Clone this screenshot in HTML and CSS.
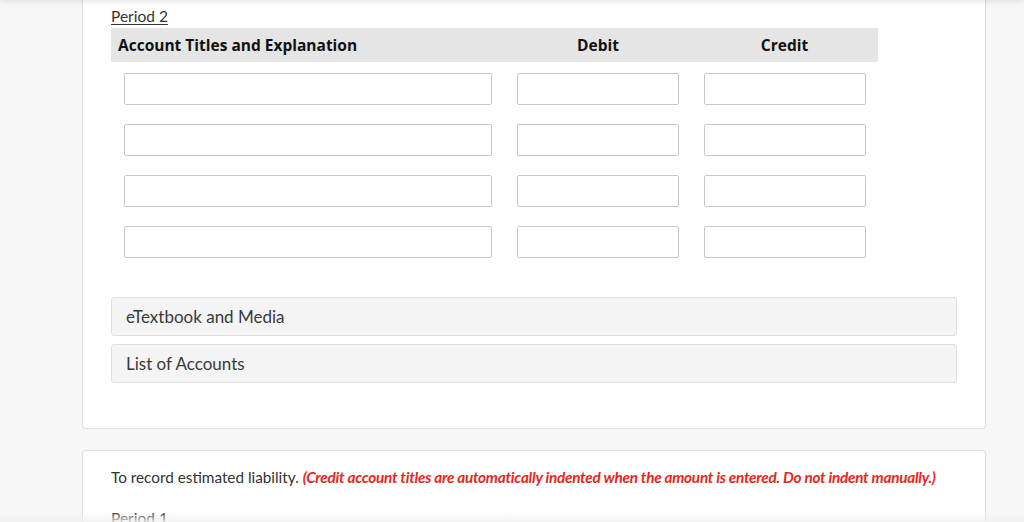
FILE: index.html
```html
<!DOCTYPE html>
<html lang="en">
<head>
    <meta charset="UTF-8">
    <meta name="viewport" content="width=device-width, initial-scale=1.0">
    <title>Journal Entries</title>
    <link rel="stylesheet" href="styles.css">
</head>
<body>
    <div class="top-shade"></div>

    <div class="page">
        <div class="card card-first">
            <a class="period" href="#">Period 2</a>
            <table class="journal">
                <colgroup>
                    <col class="w-title">
                    <col class="w-debit">
                    <col class="w-credit">
                </colgroup>
                <thead>
                    <tr>
                        <th class="col-title">Account Titles and Explanation</th>
                        <th class="col-amount">Debit</th>
                        <th class="col-amount">Credit</th>
                    </tr>
                </thead>
                <tbody>
                    <tr>
                        <td class="cell-title"><input type="text" class="field"></td>
                        <td class="cell-debit"><input type="text" class="field"></td>
                        <td class="cell-credit"><input type="text" class="field"></td>
                    </tr>
                    <tr>
                        <td class="cell-title"><input type="text" class="field"></td>
                        <td class="cell-debit"><input type="text" class="field"></td>
                        <td class="cell-credit"><input type="text" class="field"></td>
                    </tr>
                    <tr>
                        <td class="cell-title"><input type="text" class="field"></td>
                        <td class="cell-debit"><input type="text" class="field"></td>
                        <td class="cell-credit"><input type="text" class="field"></td>
                    </tr>
                    <tr>
                        <td class="cell-title"><input type="text" class="field"></td>
                        <td class="cell-debit"><input type="text" class="field"></td>
                        <td class="cell-credit"><input type="text" class="field"></td>
                    </tr>
                </tbody>
            </table>

            <div class="resources">
                <div class="resource">eTextbook and Media</div>
                <div class="resource">List of Accounts</div>
            </div>
        </div>

        <div class="card card-next">
            <p class="instructions">
                To record estimated liability.
                <em class="hint">(Credit account titles are automatically indented when the amount is entered. Do not indent manually.)</em>
            </p>
            <a class="period" href="#">Period 1</a>
        </div>
    </div>

    <div class="bottom-shade"></div>
</body>
</html>
```

FILE: styles.css
```css
/* pagina de lancamentos */
body {
    font-family: Lato, "Open Sans", Arial, sans-serif;
    margin: 0;
    padding: 0;
    background-color: #f7f7f7;
    color: #333;
    overflow: hidden;
}
.page {
    padding: 0 38px 0 82px;
}
.card {
    background: white;
    border: 1px solid #dedede;
    border-radius: 4px;
    padding: 0 28px;
}
.card-first {
    margin-top: -12px;
    border-top: none;
    border-top-left-radius: 0;
    border-top-right-radius: 0;
    padding-top: 18px;
    padding-bottom: 45px;
}
.card-next {
    margin-top: 21px;
    padding-top: 16px;
    padding-bottom: 20px;
}
.period {
    display: inline-block;
    font-size: 15.5px;
    line-height: 18px;
    color: #333;
    text-decoration: underline;
    text-underline-offset: 2px;
}
.journal {
    border-collapse: collapse;
    table-layout: fixed;
    width: 767px;
    margin-top: 3px;
}
.w-title {
    width: 394px;
}
.w-debit {
    width: 186px;
}
.w-credit {
    width: 187px;
}
.journal th {
    background: #e5e5e5;
    font-family: "Open Sans", Arial, sans-serif;
    font-size: 15.5px;
    font-weight: 700;
    color: #111;
    height: 34px;
    padding: 0;
}
.col-title {
    text-align: left;
    padding-left: 7px !important;
}
.col-amount {
    text-align: center;
}
.journal td {
    padding-top: 11px;
    padding-bottom: 8px;
}
.cell-title {
    padding-left: 13px;
    padding-right: 13px;
}
.cell-debit {
    padding-left: 12px;
    padding-right: 12px;
}
.cell-credit {
    padding-left: 13px;
    padding-right: 12px;
}
.field {
    display: block;
    box-sizing: border-box;
    width: 100%;
    height: 32px;
    margin: 0;
    border: 1px solid #c8c8c8;
    border-radius: 2px;
    background: white;
}
.resources {
    margin-top: 31px;
    display: flex;
    flex-direction: column;
    gap: 8px;
}
.resource {
    background: #f4f4f4;
    border: 1px solid #e0e0e0;
    border-radius: 3px;
    padding: 0 14px;
    height: 37px;
    line-height: 37px;
    font-size: 17px;
    color: #3a3a3a;
}
.instructions {
    margin: 0 0 21px;
    font-size: 15.3px;
    line-height: 20px;
    color: #333;
}
.hint {
    color: #e8261c;
    font-weight: 700;
    letter-spacing: -0.25px;
}
.top-shade {
    position: fixed;
    top: -10px;
    left: 0;
    right: 0;
    height: 10px;
    box-shadow: 0 1px 6px rgba(0, 0, 0, 0.12);
    background: white;
    z-index: 2;
}
.bottom-shade {
    position: fixed;
    bottom: 0;
    left: 0;
    right: 0;
    height: 10px;
    background: linear-gradient(rgba(247, 247, 247, 0), rgba(240, 240, 240, 0.85));
    z-index: 2;
}
```
